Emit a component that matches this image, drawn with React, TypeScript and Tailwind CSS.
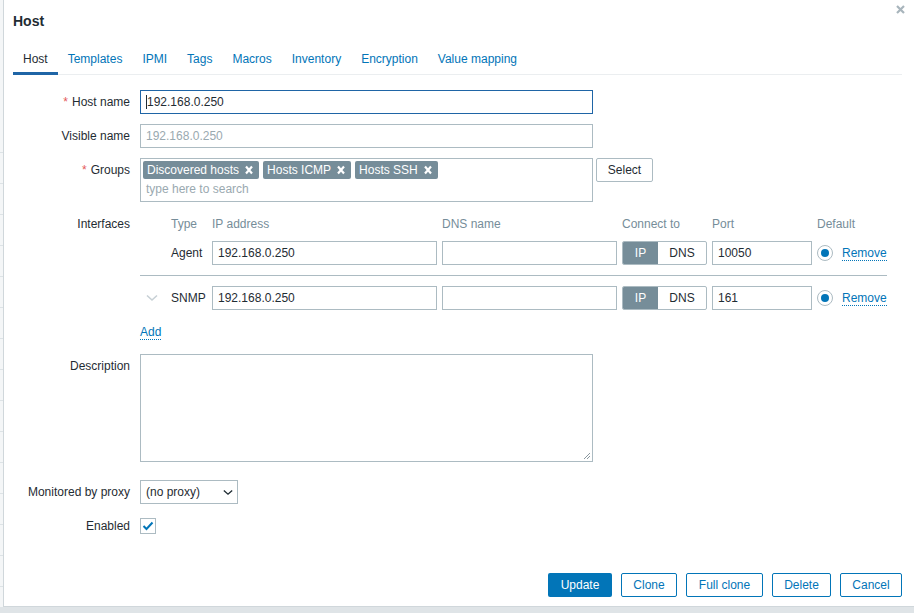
import React from "react";

const label = "w-[117px] shrink-0 text-right leading-[24px] mr-[10px]";
const input =
  "h-[24px] border border-[#acbbc2] bg-white px-[5px] leading-[22px] text-[#1f2c33]";

function Req({ children }: { children: React.ReactNode }) {
  return (
    <span>
      <span className="text-[#e45959] mr-[4px]">*</span>
      {children}
    </span>
  );
}

function Chip({ text }: { text: string }) {
  return (
    <span className="flex items-center h-[18px] bg-[#768d99] text-white pl-[4px] pr-[3px] rounded-[2px] leading-[18px]">
      {text}
      <svg width="14" height="10" viewBox="0 0 14 10" className="ml-[3px]">
        <path d="M4 1.5 L10 8.5 M10 1.5 L4 8.5" stroke="white" strokeWidth="2.2" />
      </svg>
    </span>
  );
}

function Chevron({ w = 12, color = "#c7d0d5" }: { w?: number; color?: string }) {
  return (
    <svg width={w} height={w / 2 + 2} viewBox="0 0 12 8">
      <path d="M1 1.5 L6 6 L11 1.5" fill="none" stroke={color} strokeWidth="1.6" />
    </svg>
  );
}

function IfaceRow({ type, port, chevron }: { type: string; port: string; chevron?: boolean }) {
  return (
    <>
      <div className="flex items-center justify-start pl-[6px] h-[24px]">
        {chevron && <Chevron />}
      </div>
      <div className="leading-[24px]">{type}</div>
      <div className={input}>192.168.0.250</div>
      <div className={input}></div>
      <div className="flex h-[24px] border border-[#acbbc2] rounded-[2px] overflow-hidden">
        <span className="w-[35px] bg-[#768d99] text-white text-center leading-[22px]">IP</span>
        <span className="flex-1 text-center leading-[22px]">DNS</span>
      </div>
      <div className={input}>{port}</div>
      <div className="flex items-center h-[24px]">
        <span className="w-[16px] h-[16px] rounded-full border border-[#acbbc2] flex items-center justify-center">
          <span className="w-[8px] h-[8px] rounded-full bg-[#0275b8]" />
        </span>
        <span className="ml-[9px] text-[#0275b8] border-b border-dotted border-[#0275b8] leading-[14px]">
          Remove
        </span>
      </div>
    </>
  );
}

export default function App() {
  const tabs = ["Host", "Templates", "IPMI", "Tags", "Macros", "Inventory", "Encryption", "Value mapping"];
  const buttons = [
    { t: "Clone", w: "w-[56px]" },
    { t: "Full clone", w: "w-[77px]" },
    { t: "Delete", w: "w-[59px]" },
    { t: "Cancel", w: "w-[62px]" },
  ];

  return (
    <div className="w-[914px] h-[613px] bg-[#dfe4e7] flex items-start overflow-hidden font-['Liberation_Sans',Arial,sans-serif] text-[12px] text-[#1f2c33]">
      <div className="w-[3px] h-[607px] bg-[#f4f6f7] flex flex-col pt-[152px] gap-[30px]">
        {Array.from({ length: 15 }).map((_, i) => (
          <div key={i} className="h-px bg-[#dde3e6]" />
        ))}
      </div>
      <div className="relative w-[911px] h-[607px] bg-white border-l border-b border-[#d0d7db] pl-[9px] pr-[12px] flex flex-col">
        <svg width="9" height="9" viewBox="0 0 9 9" className="absolute top-[5px] right-[9px]">
          <path d="M1 1 L8 8 M8 1 L1 8" stroke="#a8b5bc" strokeWidth="2.2" />
        </svg>

        <div className="pt-[12px] text-[14px] font-bold leading-[18px]">Host</div>

        <div className="mt-[14px] flex border-b border-[#ebeef0]">
          {tabs.map((t, i) => (
            <div
              key={t}
              className={
                i === 0
                  ? "px-[10px] pt-[8px] pb-[6px] leading-[14px] border-b-[3px] border-[#1f65a6] mb-[-1px]"
                  : "px-[10px] pt-[8px] pb-[6px] leading-[14px] border-b-[3px] border-transparent mb-[-1px] text-[#0275b8]"
              }
            >
              {t}
            </div>
          ))}
        </div>

        <div className="mt-[15px] flex-1">
          <div className="flex mb-[10px]">
            <div className={label}>
              <Req>Host name</Req>
            </div>
            <div className="w-[453px] h-[24px] border border-[#1f65a6] px-[5px] leading-[22px] flex items-center">
              <span className="w-px h-[14px] bg-[#1f2c33]" />
              192.168.0.250
            </div>
          </div>

          <div className="flex mb-[10px]">
            <div className={label}>Visible name</div>
            <div className={`${input} w-[453px] text-[#9aa9b0]`}>192.168.0.250</div>
          </div>

          <div className="flex mb-[10px]">
            <div className={label}>
              <Req>Groups</Req>
            </div>
            <div className="w-[453px] h-[44px] border border-[#acbbc2] pt-[2px] pl-[2px]">
              <div className="flex gap-[4px]">
                <Chip text="Discovered hosts" />
                <Chip text="Hosts ICMP" />
                <Chip text="Hosts SSH" />
              </div>
              <div className="pl-[3px] leading-[20px] text-[#9aa9b0]">type here to search</div>
            </div>
            <div className="ml-[3px] w-[57px] h-[24px] border border-[#acbbc2] rounded-[2px] text-center leading-[22px]">
              Select
            </div>
          </div>

          <div className="flex">
            <div className="w-[117px] shrink-0 text-right leading-[22px] pt-[1px] mr-[10px]">Interfaces</div>
            <div>
              <div className="pt-[1px] grid grid-cols-[26px_36px_225px_175px_85px_100px_75px] gap-x-[5px] text-[#768d99] leading-[22px]">
                <div />
                <div>Type</div>
                <div>IP address</div>
                <div>DNS name</div>
                <div>Connect to</div>
                <div>Port</div>
                <div>Default</div>
              </div>
              <div className="mt-[6px] grid grid-cols-[26px_36px_225px_175px_85px_100px_75px] gap-x-[5px]">
                <IfaceRow type="Agent" port="10050" />
              </div>
              <div className="mt-[10px] h-px w-[747px] bg-[#acbbc2]" />
              <div className="mt-[10px] grid grid-cols-[26px_36px_225px_175px_85px_100px_75px] gap-x-[5px]">
                <IfaceRow type="SNMP" port="161" chevron />
              </div>
              <div className="mt-[15px] flex">
                <span className="text-[#0275b8] border-b border-dotted border-[#0275b8] leading-[14px]">Add</span>
              </div>
            </div>
          </div>

          <div className="flex mt-[14px]">
            <div className={label}>Description</div>
            <div className="relative w-[453px] h-[108px] border border-[#acbbc2]">
              <svg width="8" height="8" viewBox="0 0 8 8" className="absolute right-[1px] bottom-[1px]">
                <path d="M7 1 L1 7 M7 4 L4 7" stroke="#8a979e" strokeWidth="1" />
              </svg>
            </div>
          </div>

          <div className="flex mt-[18px]">
            <div className={label}>Monitored by proxy</div>
            <div className={`${input} w-[98px] flex items-center justify-between pr-[4px]`}>
              <span>(no proxy)</span>
              <Chevron w={10} color="#1f2c33" />
            </div>
          </div>

          <div className="flex mt-[10px] items-center">
            <div className={label}>Enabled</div>
            <span className="w-[16px] h-[16px] border border-[#acbbc2] flex items-center justify-center">
              <svg width="12" height="10" viewBox="0 0 12 10">
                <path d="M1.5 5 L4.5 8 L10.5 1.5" fill="none" stroke="#0275b8" strokeWidth="2" />
              </svg>
            </span>
          </div>
        </div>

        <div className="flex justify-end gap-[9px] pb-[9px]">
          <button className="w-[64px] h-[24px] bg-[#0275b8] text-white rounded-[2px] leading-[24px]">Update</button>
          {buttons.map((b) => (
            <button
              key={b.t}
              className={`${b.w} h-[24px] border border-[#0275b8] text-[#0275b8] bg-white rounded-[2px] leading-[22px]`}
            >
              {b.t}
            </button>
          ))}
        </div>
      </div>
    </div>
  );
}
